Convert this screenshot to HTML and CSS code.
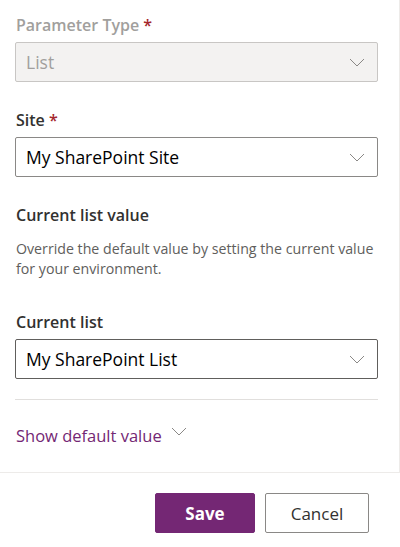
FILE: index.html
```html
<!DOCTYPE html>
<html lang="en">

<head>
    <meta charset="utf-8">
    <meta name="viewport" content="width=device-width, initial-scale=1.0">
    <title>Edit parameter</title>
    <link rel="stylesheet" href="styles.css">
</head>

<body>
    <div class="panel">
        <section class="content">
            <div class="field">
                <label class="label disabled">Parameter Type <span class="req">*</span></label>
                <div class="dropdown is-disabled">
                    <span class="value">List</span>
                    <svg class="chevron" width="16" height="9" viewBox="0 0 16 9"><polyline points="1,1 8,8 15,1" /></svg>
                </div>
            </div>

            <div class="field">
                <label class="label">Site <span class="req">*</span></label>
                <div class="dropdown">
                    <span class="value">My SharePoint Site</span>
                    <svg class="chevron" width="16" height="9" viewBox="0 0 16 9"><polyline points="1,1 8,8 15,1" /></svg>
                </div>
            </div>

            <h2 class="heading">Current list value</h2>
            <p class="desc">Override the default value by setting the current value<br>for your environment.</p>

            <div class="field">
                <label class="label">Current list</label>
                <div class="dropdown is-focus">
                    <span class="value">My SharePoint List</span>
                    <svg class="chevron" width="16" height="9" viewBox="0 0 16 9"><polyline points="1,1 8,8 15,1" /></svg>
                </div>
            </div>

            <div class="divide"></div>

            <button class="toggle">Show default value
                <svg class="chevron" width="16" height="9" viewBox="0 0 16 9"><polyline points="1,1 8,8 15,1" /></svg>
            </button>
        </section>

        <footer class="footer">
            <button class="btn primary">Save</button>
            <button class="btn">Cancel</button>
        </footer>
    </div>
</body>

</html>
```

FILE: styles.css
```css
* {
    box-sizing: border-box;
}

body {
    margin: 0;
    font-family: "Open Sans", "Noto Sans", sans-serif;
    color: #323130;
    background: #fff;
}

.panel {
    width: 400px;
}

.content {
    width: 400px;
    height: 473px;
    padding: 13px 21px 0 15px;
    border-right: 1px solid #edebe9;
    border-bottom: 1px solid #edebe9;
}

.field {
    margin-bottom: 26px;
}

.label {
    display: block;
    font-size: 16px;
    font-weight: 600;
    line-height: 24px;
    margin: 0 0 5px 1px;
}

.label.disabled {
    color: #a19f9d;
}

.req {
    color: #a4262c;
}

.dropdown {
    display: flex;
    align-items: center;
    justify-content: space-between;
    height: 40px;
    padding: 0 12px 0 10px;
    border: 1px solid #8a8886;
    border-radius: 2px;
    font-size: 17.5px;
}

.dropdown.is-disabled {
    background: #f3f2f1;
    border-color: #c8c6c4;
    color: #a19f9d;
}

.dropdown.is-focus {
    border-color: #605e5c;
}

.dropdown .value {
    color: #000;
}

.dropdown.is-disabled .value {
    color: #a19f9d;
}

.chevron {
    fill: none;
    stroke: #8a8886;
    stroke-width: 1;
}

.heading {
    margin: 0 0 12px 1px;
    font-size: 16px;
    font-weight: 600;
    line-height: 24px;
}

.desc {
    margin: 0 -15px 31px 1px;
    font-size: 14.2px;
    line-height: 20px;
    white-space: nowrap;
    color: #605e5c;
}

.divide {
    height: 1px;
    margin-top: -6px;
    background: #e1dfdd;
}

.toggle {
    display: flex;
    align-items: center;
    gap: 9px;
    margin-top: 24px;
    padding: 0 0 0 1px;
    border: none;
    background: none;
    font-family: inherit;
    font-size: 16.5px;
    line-height: 24px;
    color: #742774;
}

.toggle .chevron {
    margin-top: -10px;
}

.footer {
    display: flex;
    justify-content: flex-end;
    gap: 10px;
    padding: 20px 31px 0 0;
}

.btn {
    height: 40px;
    min-width: 104px;
    padding: 0 20px;
    border: 1px solid #8a8886;
    border-radius: 2px;
    background: #fff;
    font-family: inherit;
    font-size: 17px;
    color: #323130;
}

.btn.primary {
    width: 100px;
    min-width: 100px;
    border-color: #742774;
    background: #742774;
    color: #fff;
    font-weight: 700;
}
```
